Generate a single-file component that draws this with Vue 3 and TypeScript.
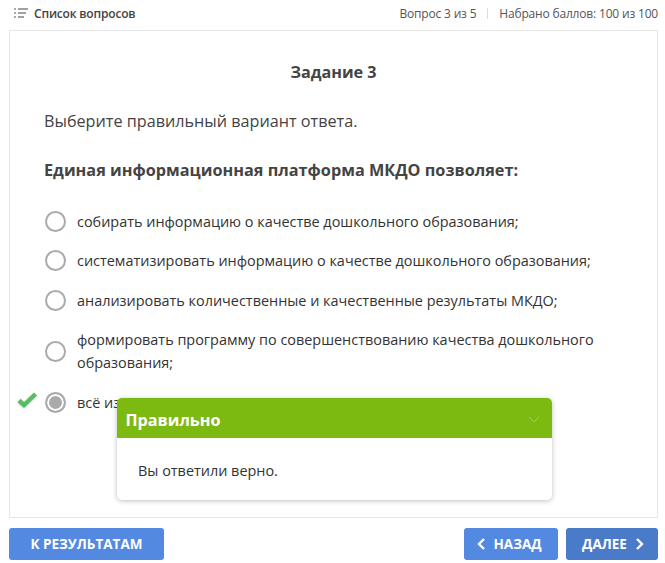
<script setup lang="ts">
interface Option {
  text: string
  selected?: boolean
}

const options: Option[] = [
  { text: 'собирать информацию о качестве дошкольного образования;' },
  { text: 'систематизировать информацию о качестве дошкольного образования;' },
  { text: 'анализировать количественные и качественные результаты МКДО;' },
  { text: 'формировать программу по совершенствованию качества дошкольного образования;' },
  { text: 'всё из перечисленного.', selected: true }
]
</script>

<template>
  <div class="page">
    <header class="top">
      <div class="list-link">
        <svg class="list-icon" width="14" height="10" viewBox="0 0 14 10">
          <path d="M0 1h2M0 5h2M0 9h2" stroke="#555" stroke-width="1.2" />
          <path d="M4 1h10M4 5h8M4 9h6" stroke="#444" stroke-width="1.2" />
        </svg>
        <span>Список вопросов</span>
      </div>
      <div class="status">
        <span>Вопрос 3 из 5</span>
        <i class="sep"></i>
        <span>Набрано баллов: 100 из 100</span>
      </div>
    </header>

    <main class="card">
      <h1 class="title">Задание 3</h1>
      <p class="hint">Выберите правильный вариант ответа.</p>
      <p class="question">Единая информационная платформа МКДО позволяет:</p>

      <ul class="options">
        <li v-for="option in options" :key="option.text" class="option">
          <svg v-if="option.selected" class="check" width="22" height="18" viewBox="0 0 22 18">
            <path d="M3 9.5l5 4.5L19.5 3" fill="none" stroke="#57bd62" stroke-width="4.4" />
          </svg>
          <span class="radio" :class="{ on: option.selected }"></span>
          <span class="text">{{ option.text }}</span>
        </li>
      </ul>

      <section class="popup">
        <div class="popup-head">
          <span>Правильно</span>
          <svg width="12" height="7" viewBox="0 0 12 7">
            <path d="M1 1l5 5 5-5" fill="none" stroke="#a3cf5c" stroke-width="1" />
          </svg>
        </div>
        <div class="popup-body">Вы ответили верно.</div>
      </section>
    </main>

    <footer class="actions">
      <button class="btn results" type="button">К РЕЗУЛЬТАТАМ</button>
      <div class="nav">
        <button class="btn back" type="button">
          <svg width="9" height="12" viewBox="0 0 9 12"><path d="M7 1L2 6l5 5" fill="none" stroke="#fff" stroke-width="2.4" /></svg>
          НАЗАД
        </button>
        <button class="btn next" type="button">
          ДАЛЕЕ
          <svg width="9" height="12" viewBox="0 0 9 12"><path d="M2 1l5 5-5 5" fill="none" stroke="#fff" stroke-width="2.4" /></svg>
        </button>
      </div>
    </footer>
  </div>
</template>

<style>
html,
body {
  margin: 0;
  background: #fff;
}
</style>

<style scoped>
.page {
  width: 665px;
  height: 563px;
  box-sizing: border-box;
  padding: 0 7px 0 9px;
  overflow: hidden;
  font-family: 'Open Sans', 'Liberation Sans', sans-serif;
  color: #333;
}

.top {
  display: flex;
  align-items: center;
  justify-content: space-between;
  height: 30px;
  padding: 0 0 4px 1px;
  box-sizing: border-box;
  font-size: 12px;
  letter-spacing: -0.18px;
}

.list-link {
  display: flex;
  align-items: center;
  gap: 6px;
  padding-left: 4px;
  font-weight: 600;
  color: #444;
}

.list-icon {
  flex: none;
}

.status {
  display: flex;
  align-items: center;
  color: #555;
}

.sep {
  width: 1px;
  height: 11px;
  margin: 0 11px;
  background: #ddd;
}

.card {
  position: relative;
  height: 488px;
  box-sizing: border-box;
  padding: 31px 34px 0;
  border: 1px solid #e6e6e6;
}

.title {
  margin: 0;
  font-size: 16.2px;
  line-height: 20px;
  font-weight: 700;
  text-align: center;
  color: #444;
}

.hint {
  margin: 29px 0 0;
  font-size: 16.2px;
  line-height: 20px;
  color: #444;
}

.question {
  margin: 29px 0 0;
  font-size: 16.25px;
  line-height: 20px;
  font-weight: 700;
  color: #444;
}

.options {
  margin: 21.5px 0 0;
  padding: 0;
  list-style: none;
}

.option {
  position: relative;
  display: flex;
  align-items: center;
  gap: 11px;
  min-height: 39.5px;
  font-size: 14.43px;
  line-height: 23px;
  color: #333;
}

.option:nth-child(4) {
  min-height: 60px;
  margin: 1px 0 2px;
}

.radio {
  flex: none;
  width: 21px;
  height: 21px;
  margin-left: 1px;
  box-sizing: border-box;
  border: 2px solid #aaa;
  border-radius: 50%;
  background: #fff;
}

.radio.on {
  background: #aaa;
  box-shadow: inset 0 0 0 2px #fff;
}

.check {
  position: absolute;
  left: -28px;
  top: 8px;
  filter: drop-shadow(0 1px 1px rgba(0, 0, 0, 0.15));
}

.popup {
  position: absolute;
  left: 107px;
  top: 367px;
  width: 435px;
  height: 102px;
  border-radius: 5px;
  background: #fff;
  box-shadow: 0 1px 5px rgba(0, 0, 0, 0.25);
  overflow: hidden;
}

.popup-head {
  display: flex;
  align-items: center;
  justify-content: space-between;
  height: 40px;
  box-sizing: border-box;
  padding: 3px 12px 0 8.5px;
  background: #7cb911;
  color: #fff;
  font-size: 16.2px;
  font-weight: 700;
}

.popup-body {
  padding: 23px 21px 0;
  font-size: 14.43px;
  line-height: 20px;
  color: #333;
}

.actions {
  display: flex;
  justify-content: space-between;
  margin-top: 10px;
}

.nav {
  display: flex;
  gap: 8px;
}

.btn {
  display: inline-flex;
  align-items: center;
  justify-content: center;
  gap: 6px;
  height: 32px;
  padding: 0;
  border: 0;
  border-radius: 3px;
  background: #5389e0;
  color: #fff;
  font-family: inherit;
  font-size: 13.5px;
  font-weight: 700;
}

.results {
  width: 155px;
}

.back {
  width: 94px;
  gap: 7px;
  padding-right: 3px;
}

.next {
  width: 92px;
  gap: 8px;
  padding-left: 2px;
  background: #4a7bc8;
}
</style>
